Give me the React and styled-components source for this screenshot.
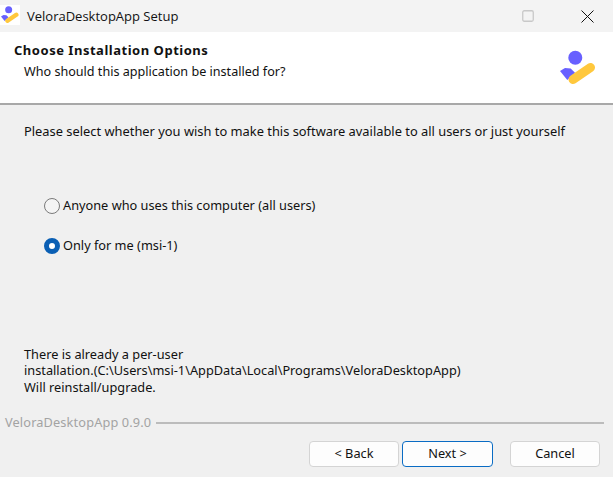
import React from "react";
import styled, { createGlobalStyle } from "styled-components";

const Global = createGlobalStyle`
  html, body { margin: 0; padding: 0; background: #f0f0f0; }
  * { box-sizing: border-box; }
`;
const Win = styled.div`
  width: 613px; height: 477px; display: flex; flex-direction: column; overflow: hidden;
  background: #f0f0f0; color: #111; font: 12.75px/16.5px "Noto Sans", sans-serif;
`;
const TitleBar = styled.div`
  height: 32px; flex: none; display: flex; align-items: center; background: #f3f3f3;
`;
const TitleIcon = styled.div`
  width: 20px; height: 20px; margin-top: -2px; background: #fff; display: flex;
  align-items: center; justify-content: center;
`;
const TitleText = styled.div`
  margin-left: 7px; font: 13px/16px "Open Sans", sans-serif; color: #111; flex: 1;
`;
const WinButton = styled.div`
  width: 46px; height: 32px; display: flex; align-items: center; justify-content: center;
  margin-right: ${p => p.$mr || 0}px;
`;
const Header = styled.div`
  height: 73px; flex: none; background: #fff; border-bottom: 2px solid #a8a8a8;
  display: flex; justify-content: space-between; padding: 10px 17px 0 14px;
`;
const HeaderTitle = styled.div` font-weight: 700; font-size: 13px; line-height: 17px; letter-spacing: .52px; `;
const HeaderSub = styled.div` margin: 5px 0 0 10px; font-size: 12.6px; `;
const HeaderLogo = styled.div` margin-top: 8px; `;
const Body = styled.div` flex: 1; display: flex; flex-direction: column; padding: 0 0 0 24px; `;
const Intro = styled.div` margin-top: 18px; font-size: 12.87px; `;
const Radios = styled.div`
  margin: 58px 0 0 20px; display: flex; flex-direction: column; gap: 24px;
`;
const RadioRow = styled.div` display: flex; align-items: center; gap: 3px; height: 16px; `;
const RadioDot = styled.span`
  width: 16px; height: 16px; border-radius: 50%; flex: none;
  ${p => p.$on
    ? "background: #fff; border: 5px solid #0a5fb4;"
    : "background: #f4f4f4; border: 1.5px solid #7a7a7a;"}
`;
const Note = styled.div` margin-top: 92px; `;
const Footer = styled.div`
  height: 63px; flex: none; display: flex; flex-direction: column; padding: 0 9px 0 5px;
`;
const BrandRow = styled.div` display: flex; align-items: center; gap: 5px; `;
const Brand = styled.span` color: #a3a3a3; letter-spacing: .14px; `;
const Rule = styled.span` flex: 1; height: 2px; background: #bcbcbc; margin-top: 2px; `;
const Buttons = styled.div` display: flex; margin-top: 10px; justify-content: flex-end; padding-right: 4px; `;
const Button = styled.div`
  width: ${p => p.$primary ? 91 : 90}px; height: 26px; display: flex; align-items: center; justify-content: center;
  background: #fdfdfd; border: 1px solid ${p => p.$primary ? "#0a6cc4" : "#d4d4d4"}; border-radius: 4px;
  margin-left: ${p => p.$ml || 0}px;
`;

const Logo = ({ size }) => (
  <svg width={size} height={size} viewBox="0 0 36 36">
    <circle cx="15.3" cy="7.7" r="7" fill="#6860ff" />
    <path d="M0 21 L5 18 L10.7 18.5 L15 22.7 L7.3 30 Z" fill="#6860ff" />
    <line x1="13" y1="29.5" x2="30.5" y2="17.5" stroke="#ffc83d" strokeWidth="9" strokeLinecap="round" />
  </svg>
);

export default function App() {
  return (
    <Win>
      <Global />
      <TitleBar>
        <TitleIcon><Logo size={18} /></TitleIcon>
        <TitleText>VeloraDesktopApp Setup</TitleText>
        <WinButton $mr={13}>
          <svg width="12" height="12" viewBox="0 0 12 12"><rect x=".75" y=".75" width="10.5" height="10.5" rx="1.5" fill="none" stroke="#c8c8c8" strokeWidth="1.3" /></svg>
        </WinButton>
        <WinButton $mr={3}>
          <svg width="13" height="13" viewBox="0 0 13 13"><path d="M.5 .5 L12.5 12.5 M12.5 .5 L.5 12.5" stroke="#111" strokeWidth="1" /></svg>
        </WinButton>
      </TitleBar>
      <Header>
        <div>
          <HeaderTitle>Choose Installation Options</HeaderTitle>
          <HeaderSub>Who should this application be installed for?</HeaderSub>
        </div>
        <HeaderLogo><Logo size={36} /></HeaderLogo>
      </Header>
      <Body>
        <Intro>Please select whether you wish to make this software available to all users or just yourself</Intro>
        <Radios>
          <RadioRow><RadioDot />Anyone who uses this computer (all users)</RadioRow>
          <RadioRow><RadioDot $on />Only for me (msi-1)</RadioRow>
        </Radios>
        <Note>
          There is already a per-user<br />
          installation.(C:\Users\msi-1\AppData\Local\Programs\VeloraDesktopApp)<br />
          Will reinstall/upgrade.
        </Note>
      </Body>
      <Footer>
        <BrandRow><Brand>VeloraDesktopApp 0.9.0</Brand><Rule /></BrandRow>
        <Buttons>
          <Button>&lt; Back</Button>
          <Button $primary $ml={3}>Next &gt;</Button>
          <Button $ml={17}>Cancel</Button>
        </Buttons>
      </Footer>
    </Win>
  );
}
